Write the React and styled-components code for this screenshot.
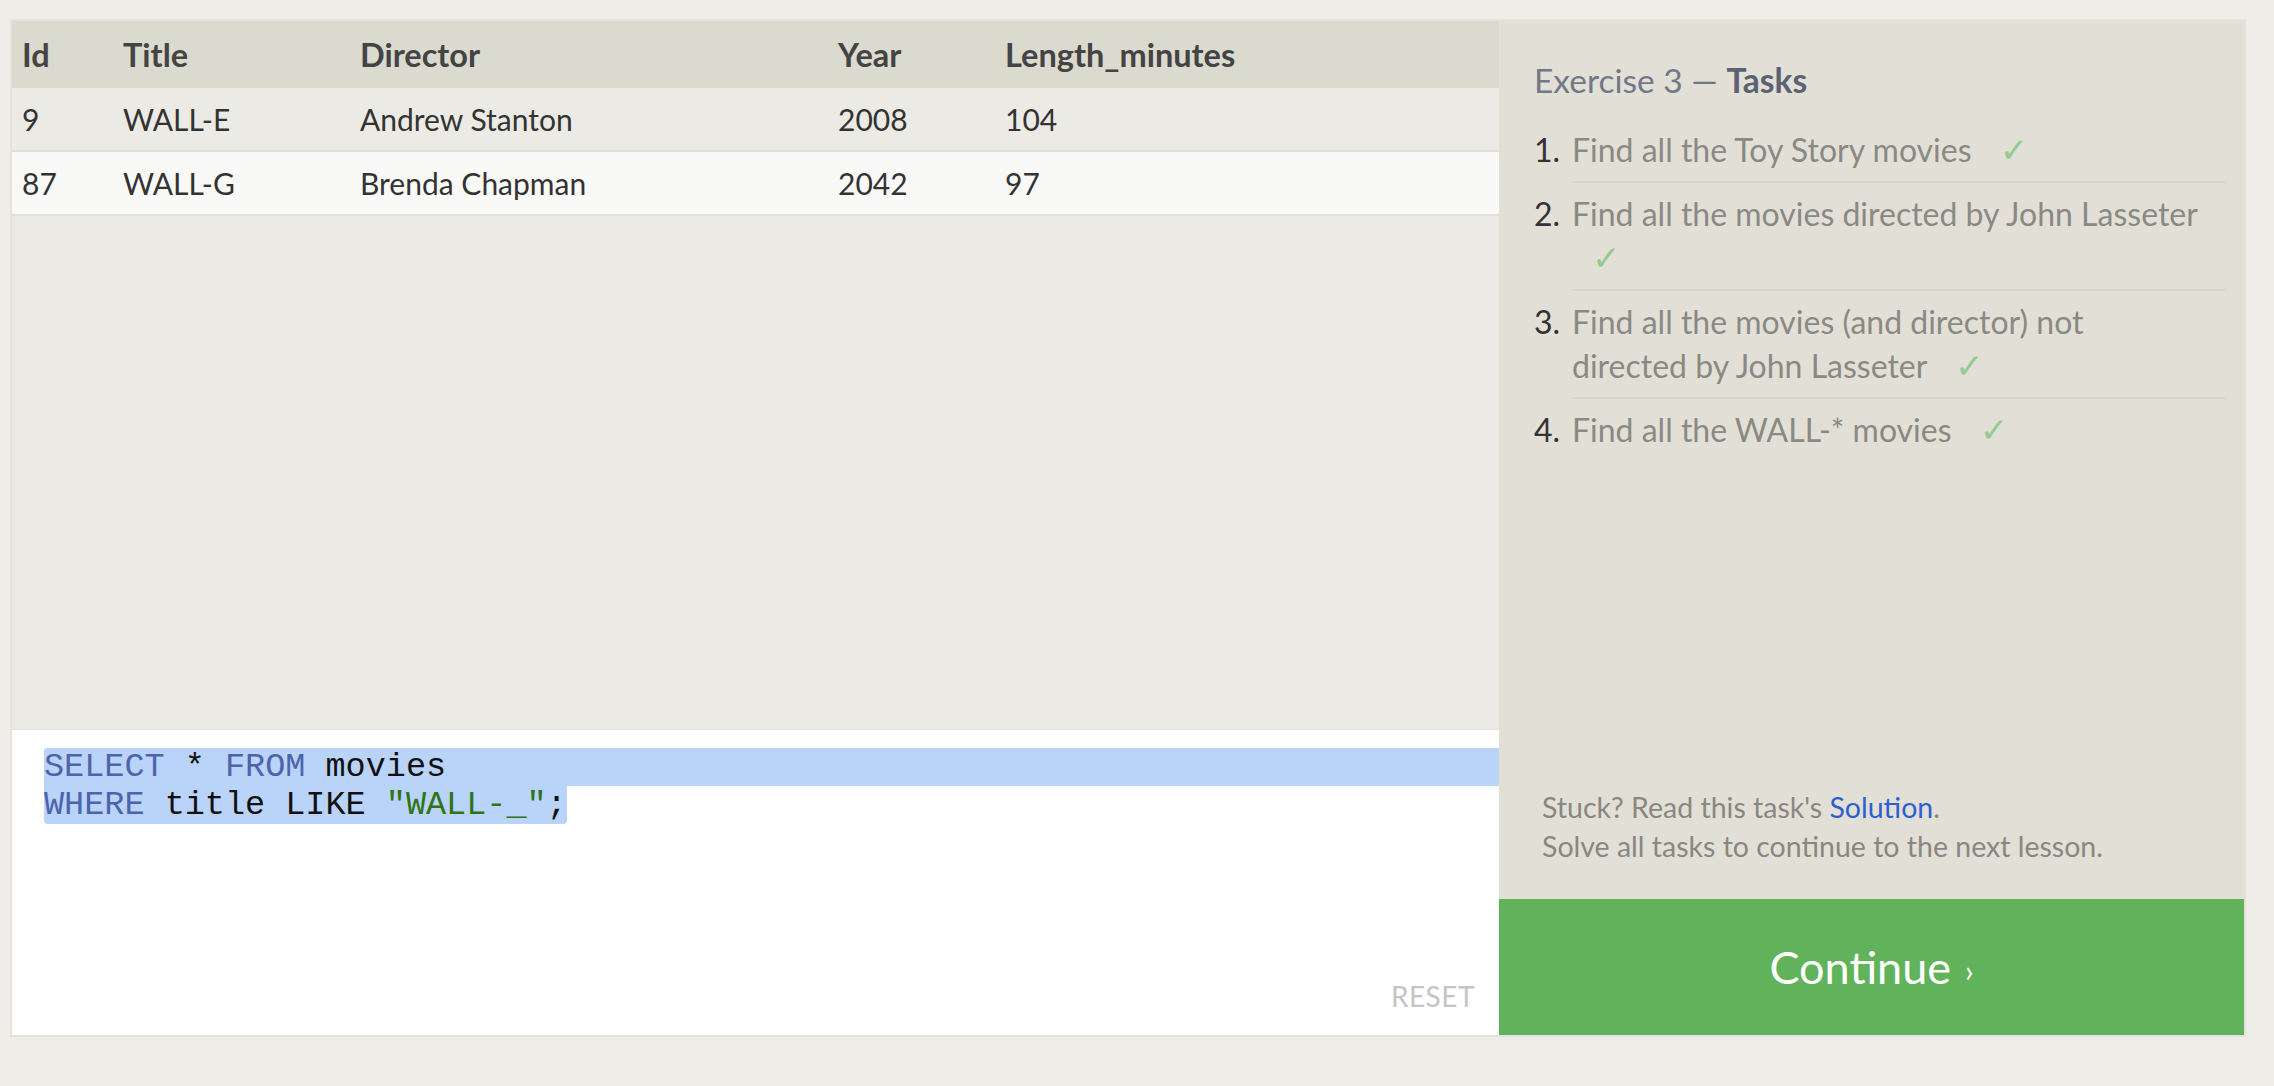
import React from "react";
import styled, { createGlobalStyle } from "styled-components";

const GlobalStyle = createGlobalStyle`
  html, body {
    margin: 0;
    padding: 0;
    background: #efede8;
  }
  body {
    font-family: Lato, "Open Sans", sans-serif;
  }
`;

const Page = styled.div`
  padding: 19px 0 0 10px;
`;

const Frame = styled.div`
  width: 2232px;
  height: 1014px;
  border: 2px solid #e5e3dc;
  display: grid;
  grid-template-columns: 1fr 745px;
`;

const LeftColumn = styled.div`
  display: flex;
  flex-direction: column;
  background: #ebe9e4;
  min-width: 0;
`;

const Table = styled.div`
  display: flex;
  flex-direction: column;
`;

const Row = styled.div`
  display: grid;
  grid-template-columns: 101px 237px 478px 167px 1fr;
  height: ${(p) => (p.$head ? "67px" : "62px")};
  align-items: center;
  background: ${(p) => p.$bg};
  border-bottom: ${(p) => (p.$head ? "none" : "2px solid #e0dfd8")};
  font-size: ${(p) => (p.$head ? "32.5px" : "30px")};
  font-weight: ${(p) => (p.$head ? 700 : 400)};
  color: ${(p) => (p.$head ? "#444444" : "#333333")};
`;

const Cell = styled.div`
  padding-left: 10px;
  white-space: nowrap;
`;

const Filler = styled.div`
  flex: 1;
  border-bottom: 1px solid #e2e0d9;
`;

const Editor = styled.div`
  position: relative;
  height: 305px;
  background: #ffffff;
  padding: 18px 0 0 32px;
  box-sizing: border-box;
`;

const CodeLine = styled.div`
  font-family: "Liberation Mono", "Courier New", monospace;
  font-size: 33.5px;
  line-height: 38px;
  height: 38px;
  white-space: pre;
  color: #111111;
  background: #bad3f9;
  width: ${(p) => (p.$full ? "auto" : "fit-content")};
  border-radius: ${(p) => (p.$full ? "3px 0 0 0" : "0 0 4px 4px")};
`;

const Keyword = styled.span`
  color: #4d64ab;
`;

const Str = styled.span`
  color: #2f7417;
`;

const Reset = styled.div`
  position: absolute;
  right: 24px;
  bottom: 22px;
  font-size: 28px;
  color: #c5c5c5;
  letter-spacing: 0.5px;
`;

const RightPanel = styled.div`
  display: flex;
  flex-direction: column;
  background: #e2e0d6;
`;

const TaskArea = styled.div`
  flex: 1;
  padding: 39px 19px 0 35px;
`;

const Heading = styled.div`
  font-size: 33.5px;
  line-height: 40px;
  color: #737888;
  margin-bottom: 19px;
`;

const HeadingStrong = styled.span`
  color: #5c6272;
  font-weight: 700;
`;

const TaskList = styled.ol`
  list-style: none;
  margin: 0;
  padding: 0;
`;

const TaskItem = styled.li`
  display: flex;
  font-size: 32px;
  line-height: 44px;
`;

const TaskNumber = styled.span`
  width: 38px;
  flex-shrink: 0;
  padding-top: 9px;
  color: #333333;
`;

const TaskText = styled.span`
  flex: 1;
  padding: 9px 24px 9px 0;
  color: #8a8984;
  border-bottom: ${(p) => (p.$last ? "none" : "2px solid #d8d6cc")};
`;

const Check = styled.span`
  display: inline-block;
  margin-left: 20px;
  color: #94cb90;
  font-family: "DejaVu Sans", sans-serif;
  font-size: 34px;
  line-height: 1;
  vertical-align: baseline;
`;

const Help = styled.div`
  padding: 0 20px 33px 43px;
  font-size: 28.5px;
  line-height: 39px;
  color: #8a8782;
`;

const HelpLink = styled.a`
  color: #2d5fd3;
  text-decoration: none;
`;

const ContinueButton = styled.button`
  height: 136px;
  border: none;
  background: #61b35b;
  color: #ffffff;
  font-family: Lato, "Open Sans", sans-serif;
  font-size: 45px;
  display: flex;
  align-items: center;
  justify-content: center;
  gap: 14px;
  cursor: pointer;
`;

const Chevron = styled.span`
  font-size: 30px;
  padding-top: 6px;
`;

const columns = ["Id", "Title", "Director", "Year", "Length_minutes"];
const rows = [
  ["9", "WALL-E", "Andrew Stanton", "2008", "104"],
  ["87", "WALL-G", "Brenda Chapman", "2042", "97"],
];
const tasks = [
  "Find all the Toy Story movies",
  "Find all the movies directed by John Lasseter",
  "Find all the movies (and director) not directed by John Lasseter",
  "Find all the WALL-* movies",
];

export default function App() {
  return (
    <Page>
      <GlobalStyle />
      <Frame>
        <LeftColumn>
          <Table>
            <Row $head $bg="#dbdacf">
              {columns.map((c) => (
                <Cell key={c}>{c}</Cell>
              ))}
            </Row>
            {rows.map((r, i) => (
              <Row key={r[0]} $bg={i % 2 ? "#f9f9f8" : "#ebeae4"}>
                {r.map((v, j) => (
                  <Cell key={j}>{v}</Cell>
                ))}
              </Row>
            ))}
          </Table>
          <Filler />
          <Editor>
            <CodeLine $full>
              <Keyword>SELECT</Keyword> * <Keyword>FROM</Keyword> movies
            </CodeLine>
            <CodeLine>
              <Keyword>WHERE</Keyword> title LIKE <Str>"WALL-_"</Str>;
            </CodeLine>
            <Reset>RESET</Reset>
          </Editor>
        </LeftColumn>
        <RightPanel>
          <TaskArea>
            <Heading>
              Exercise 3 — <HeadingStrong>Tasks</HeadingStrong>
            </Heading>
            <TaskList>
              {tasks.map((t, i) => (
                <TaskItem key={t}>
                  <TaskNumber>{i + 1}.</TaskNumber>
                  <TaskText $last={i === tasks.length - 1}>
                    {t} <Check>✓</Check>
                  </TaskText>
                </TaskItem>
              ))}
            </TaskList>
          </TaskArea>
          <Help>
            Stuck? Read this task's <HelpLink href="#">Solution</HelpLink>.
            <br />
            Solve all tasks to continue to the next lesson.
          </Help>
          <ContinueButton>
            Continue <Chevron>›</Chevron>
          </ContinueButton>
        </RightPanel>
      </Frame>
    </Page>
  );
}
